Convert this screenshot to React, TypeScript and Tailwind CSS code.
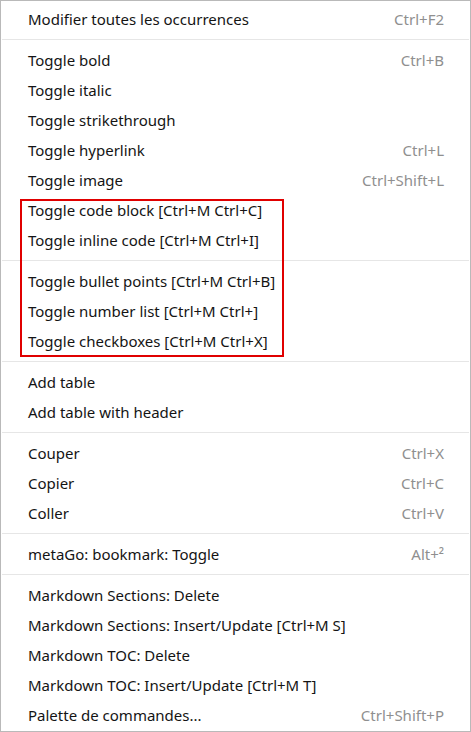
import React from 'react';

type Item = { label: string; shortcut?: string } | 'sep';

const items: Item[] = [
  { label: 'Modifier toutes les occurrences', shortcut: 'Ctrl+F2' },
  'sep',
  { label: 'Toggle bold', shortcut: 'Ctrl+B' },
  { label: 'Toggle italic' },
  { label: 'Toggle strikethrough' },
  { label: 'Toggle hyperlink', shortcut: 'Ctrl+L' },
  { label: 'Toggle image', shortcut: 'Ctrl+Shift+L' },
  { label: 'Toggle code block [Ctrl+M Ctrl+C]' },
  { label: 'Toggle inline code [Ctrl+M Ctrl+I]' },
  'sep',
  { label: 'Toggle bullet points [Ctrl+M Ctrl+B]' },
  { label: 'Toggle number list [Ctrl+M Ctrl+]' },
  { label: 'Toggle checkboxes [Ctrl+M Ctrl+X]' },
  'sep',
  { label: 'Add table' },
  { label: 'Add table with header' },
  'sep',
  { label: 'Couper', shortcut: 'Ctrl+X' },
  { label: 'Copier', shortcut: 'Ctrl+C' },
  { label: 'Coller', shortcut: 'Ctrl+V' },
  'sep',
  { label: 'metaGo: bookmark: Toggle', shortcut: 'Alt+²' },
  'sep',
  { label: 'Markdown Sections: Delete' },
  { label: 'Markdown Sections: Insert/Update [Ctrl+M S]' },
  { label: 'Markdown TOC: Delete' },
  { label: 'Markdown TOC: Insert/Update [Ctrl+M T]' },
  { label: 'Palette de commandes...', shortcut: 'Ctrl+Shift+P' },
];

export default function App() {
  return (
    <div
      className="relative w-[471px] h-[732px] bg-white border border-[#b9b9b9] pt-[3px] pb-[1px] text-[15px] text-[#141414]"
      style={{ fontFamily: '"Noto Sans", "Open Sans", sans-serif' }}
    >
      {items.map((item, i) =>
        item === 'sep' ? (
          <div key={i} className="h-[11px] flex items-center px-[1px]">
            <div className="w-full h-px bg-[#e6e6e6]" />
          </div>
        ) : (
          <div key={i} className="h-[30px] flex items-center justify-between pl-[27px] pr-[26px]">
            <span>{item.label}</span>
            {item.shortcut && <span className="text-[#8f8f8f]">{item.shortcut}</span>}
          </div>
        )
      )}

      {/* red annotation box */}
      <div className="absolute left-[19px] top-[198px] w-[264px] h-[158px] border-2 border-[#e00000] pointer-events-none" />
    </div>
  );
}
